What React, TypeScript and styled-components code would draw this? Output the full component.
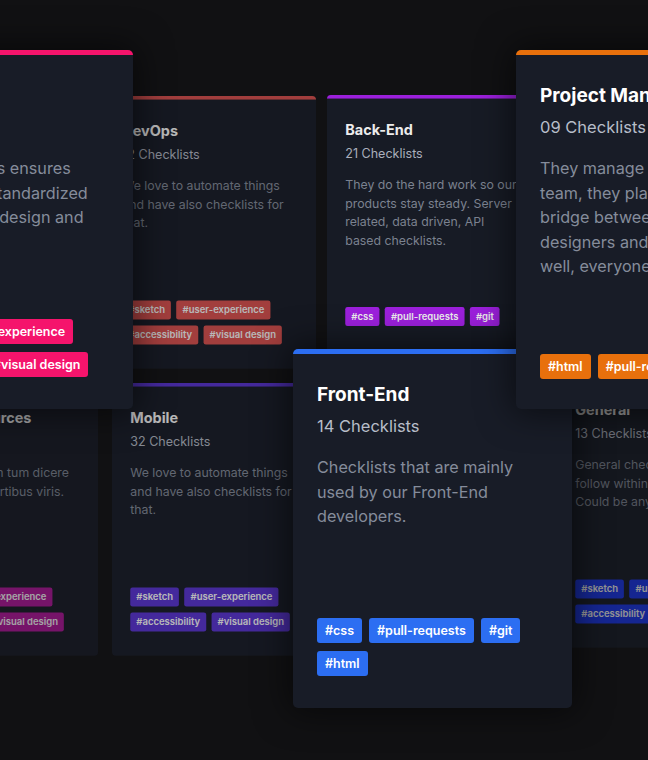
import React from "react";
import styled, { createGlobalStyle } from "styled-components";

const GlobalStyle = createGlobalStyle`
  html, body {
    margin: 0;
    padding: 0;
    background: #111113;
  }
  body {
    font-family: Inter, "Noto Sans", "Liberation Sans", sans-serif;
    -webkit-font-smoothing: antialiased;
  }
`;

const Canvas = styled.main`
  position: relative;
  width: 648px;
  height: 760px;
  overflow: hidden;
  background: #111113;
`;

type Depth = "back" | "front";

const Card = styled.article<{
  $accent: string;
  $x: number;
  $y: number;
  $depth: Depth;
  $fade: number;
  $z: number;
}>`
  position: absolute;
  left: ${(p) => p.$x}px;
  top: ${(p) => p.$y}px;
  z-index: ${(p) => p.$z};
  width: 279px;
  height: 359px;
  box-sizing: border-box;
  display: flex;
  flex-direction: column;
  padding: 29px 24px 0;
  background: #181c27;
  border-top: 5px solid ${(p) => p.$accent};
  border-radius: 5px;
  opacity: ${(p) => p.$fade};
  transform-origin: 0 0;
  transform: ${(p) => (p.$depth === "back" ? "scale(0.76)" : "none")};
  box-shadow: ${(p) =>
    p.$depth === "front" ? "0 0 34px 4px rgba(0, 0, 0, 0.55)" : "none"};
`;

const Title = styled.h3`
  margin: 0;
  font-size: 19px;
  line-height: 24px;
  font-weight: 700;
  color: #ffffff;
  white-space: nowrap;
`;

const Count = styled.p`
  margin: 7px 0 0;
  font-size: 16.5px;
  line-height: 24px;
  font-weight: 400;
  color: #b7bdc9;
  white-space: nowrap;
`;

const Desc = styled.p`
  margin: 17px 0 0;
  min-height: 88px;
  font-size: 16.2px;
  line-height: 24.5px;
  font-weight: 400;
  color: #858c9b;
  white-space: pre-line;
`;

const Tags = styled.ul`
  list-style: none;
  margin: 75px 0 0;
  padding: 0;
  display: flex;
  flex-wrap: wrap;
  gap: 8px 7px;
`;

const Tag = styled.li<{ $accent: string }>`
  height: 25px;
  line-height: 25px;
  padding: 0 8px;
  border-radius: 3px;
  background: ${(p) => p.$accent};
  color: #ffffff;
  font-size: 12.5px;
  font-weight: 600;
  white-space: nowrap;
`;

type CardData = {
  title: string;
  count: string;
  desc: string;
  tags: string[];
  accent: string;
  x: number;
  y: number;
  depth: Depth;
  fade: number;
  z: number;
};

const designTags = ["#sketch", "#user-experience", "#accessibility", "#visual design"];
const automate = "We love to automate things\nand have also checklists for\nthat.";

const cards: CardData[] = [
  {
    title: "DevOps",
    count: "12 Checklists",
    desc: automate,
    tags: designTags,
    accent: "#e0524f",
    x: 104,
    y: 96,
    depth: "back",
    fade: 0.7,
    z: 1,
  },
  {
    title: "Back-End",
    count: "21 Checklists",
    desc: "They do the hard work so our\nproducts stay steady. Server\nrelated, data driven, API\nbased checklists.",
    tags: ["#css", "#pull-requests", "#git"],
    accent: "#a822ee",
    x: 327,
    y: 95,
    depth: "back",
    fade: 0.92,
    z: 1,
  },
  {
    title: "Design Resources",
    count: "18 Checklists",
    desc: "Quod non faciam tum dicere\nHaec dicta de fortibus viris.",
    tags: designTags,
    accent: "#b5179e",
    x: -114,
    y: 383,
    depth: "back",
    fade: 0.62,
    z: 1,
  },
  {
    title: "Mobile",
    count: "32 Checklists",
    desc: automate,
    tags: designTags,
    accent: "#5a34d6",
    x: 112,
    y: 383,
    depth: "back",
    fade: 0.7,
    z: 1,
  },
  {
    title: "General",
    count: "13 Checklists",
    desc: "General checklists that we all\nfollow within the company.\nCould be anything.",
    tags: designTags,
    accent: "#1a38f8",
    x: 557,
    y: 375,
    depth: "back",
    fade: 0.55,
    z: 1,
  },
  {
    title: "Design",
    count: "27 Checklists",
    desc: "Visual checklists ensures\na modern and standardized\nvisual interface design and",
    tags: designTags,
    accent: "#f5146c",
    x: -146,
    y: 50,
    depth: "front",
    fade: 1,
    z: 2,
  },
  {
    title: "Front-End",
    count: "14 Checklists",
    desc: "Checklists that are mainly\nused by our Front-End\ndevelopers.",
    tags: ["#css", "#pull-requests", "#git", "#html"],
    accent: "#2c6ef2",
    x: 293,
    y: 349,
    depth: "front",
    fade: 1,
    z: 3,
  },
  {
    title: "Project Management",
    count: "09 Checklists",
    desc: "They manage the project and\nteam, they plan and are the\nbridge between developers,\ndesigners and the clients, as\nwell, everyone loves them.",
    tags: ["#html", "#pull-requests", "#git"],
    accent: "#e8700c",
    x: 516,
    y: 50,
    depth: "front",
    fade: 1,
    z: 4,
  },
];

function ChecklistCard({ c }: { c: CardData }) {
  return (
    <Card
      $accent={c.accent}
      $x={c.x}
      $y={c.y}
      $depth={c.depth}
      $fade={c.fade}
      $z={c.z}
    >
      <Title>{c.title}</Title>
      <Count>{c.count}</Count>
      <Desc>{c.desc}</Desc>
      <Tags>
        {c.tags.map((t) => (
          <Tag key={t} $accent={c.accent}>
            {t}
          </Tag>
        ))}
      </Tags>
    </Card>
  );
}

export default function App() {
  return (
    <>
      <GlobalStyle />
      <Canvas>
        {cards.map((c) => (
          <ChecklistCard key={c.title} c={c} />
        ))}
      </Canvas>
    </>
  );
}
